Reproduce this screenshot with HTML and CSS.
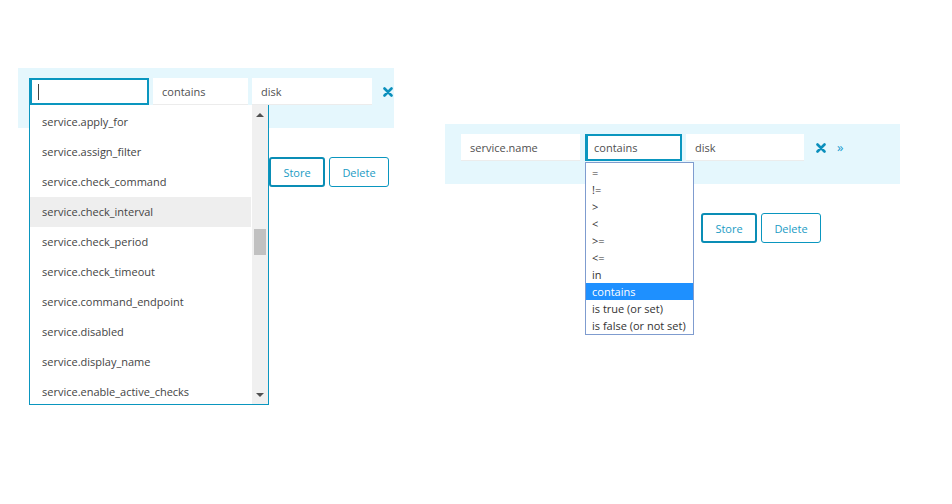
FILE: index.html
```html
<!DOCTYPE html>
<html lang="en">
<head>
  <meta charset="UTF-8">
  <title>Filter editor</title>
  <link rel="stylesheet" href="styles.css">
</head>
<body>
  <main class="stage">
    <section class="scene scene-left">
      <div class="filter-bar">
        <div class="field field-column is-focused">
          <span class="caret"></span>
          <ul class="suggestions">
            <li>service.apply_for</li>
            <li>service.assign_filter</li>
            <li>service.check_command</li>
            <li class="hover">service.check_interval</li>
            <li>service.check_period</li>
            <li>service.check_timeout</li>
            <li>service.command_endpoint</li>
            <li>service.disabled</li>
            <li>service.display_name</li>
            <li>service.enable_active_checks</li>
          </ul>
          <div class="scrollbar">
            <span class="arrow up"></span>
            <span class="thumb"></span>
            <span class="arrow down"></span>
          </div>
        </div>
        <div class="field field-op">contains</div>
        <div class="field field-value">disk</div>
        <span class="remove">
          <svg width="10" height="10" viewBox="0 0 10 10"><path d="M1.5 1.5 L8.5 8.5 M8.5 1.5 L1.5 8.5" stroke="currentColor" stroke-width="2.6" stroke-linecap="round"/></svg>
        </span>
      </div>
      <div class="actions">
        <button class="btn btn-primary">Store</button>
        <button class="btn">Delete</button>
      </div>
    </section>

    <section class="scene scene-right">
      <div class="filter-bar">
        <div class="field field-column">service.name</div>
        <div class="field field-op is-focused">contains
          <ul class="options">
            <li>=</li>
            <li>!=</li>
            <li>&gt;</li>
            <li>&lt;</li>
            <li>&gt;=</li>
            <li>&lt;=</li>
            <li>in</li>
            <li class="selected">contains</li>
            <li>is true (or set)</li>
            <li>is false (or not set)</li>
          </ul>
        </div>
        <div class="field field-value">disk</div>
        <span class="remove">
          <svg width="10" height="10" viewBox="0 0 10 10"><path d="M1.5 1.5 L8.5 8.5 M8.5 1.5 L1.5 8.5" stroke="currentColor" stroke-width="2.6" stroke-linecap="round"/></svg>
        </span>
        <span class="expand">&raquo;</span>
      </div>
      <div class="actions">
        <button class="btn btn-primary">Store</button>
        <button class="btn">Delete</button>
      </div>
    </section>
  </main>
</body>
</html>
```

FILE: styles.css
```css
html, body { min-height: 100vh; }
body {
  margin: 0;
  font-family: 'Open Sans', 'Noto Sans', sans-serif;
  font-size: 11px;
  color: #505050;
  background: #fff;
}
.stage { display: flex; align-items: flex-start; min-height: 504px; }
.scene-left { margin: 68px 0 0 18px; width: 376px; flex-shrink: 0; }
.scene-right { margin: 124px 0 0 51px; width: 455px; flex-shrink: 0; }

.filter-bar {
  background-color: #e5f7fd;
  height: 60px;
  box-sizing: border-box;
  padding: 10px 0 10px 11px;
  display: flex;
  align-items: flex-start;
  gap: 4px;
}
.scene-right .filter-bar { padding-left: 16px; }

.field {
  position: relative;
  flex-shrink: 0;
  background: #fff;
  height: 27px;
  box-sizing: border-box;
  padding: 1px 9px 0;
  display: flex;
  align-items: center;
  border-bottom: 1px solid #ececec;
}
.field-column { width: 120px; }
.field-op { width: 95px; }
.field-value { width: 120px; }
.scene-right .field-column { width: 119px; }
.scene-right .field-op { width: 97px; margin-left: 1px; }
.scene-right .field-value { width: 118px; }

.is-focused {
  border: 2px solid #0a96bf;
  border-left-width: 3px;
  padding: 0 0 0 6px;
}
.caret { width: 1px; height: 16px; background: #444; }

.remove { color: #0a8fbc; margin: 9px 0 0 7px; display: flex; flex-shrink: 0; }
.scene-right .remove { margin-left: 8px; }
.expand { color: #1a9bd0; font-size: 13px; margin: 4px 0 0 7px; }

.suggestions {
  position: absolute;
  top: 25px; left: -3px;
  width: 240px; height: 300px;
  box-sizing: border-box;
  margin: 0; padding: 2px 17px 0 0;
  list-style: none;
  background: #fff;
  border: 1px solid #0a96bf;
  border-top: none;
  z-index: 2;
  overflow: hidden;
}
.suggestions li {
  height: 30px;
  line-height: 30px;
  padding-left: 12px;
  color: #444;
}
.suggestions li.hover { background: #eeeeee; }
.scrollbar {
  position: absolute;
  top: 25px; left: 220px;
  width: 16px; height: 299px;
  background: #f0f0f0;
  z-index: 3;
}
.scrollbar .thumb {
  position: absolute;
  left: 2px; top: 124px;
  width: 12px; height: 26px;
  background: #c1c1c1;
}
.scrollbar .arrow {
  position: absolute;
  left: 4px;
  width: 0; height: 0;
  border-left: 4px solid transparent;
  border-right: 4px solid transparent;
}
.scrollbar .up { top: 8px; border-bottom: 4px solid #505050; }
.scrollbar .down { bottom: 7px; border-top: 4px solid #505050; }

.options {
  position: absolute;
  top: 26px; left: -3px;
  width: 107px;
  margin: 0; padding: 1px 0 0;
  list-style: none;
  background: #fff;
  border: 1px solid #7f9ccf;
  z-index: 2;
}
.options li {
  height: 17px;
  line-height: 17px;
  padding-left: 6px;
  color: #333;
  white-space: nowrap;
}
.options li.selected { background: #1e90ff; color: #fff; }

.actions { margin-top: 29px; display: flex; gap: 4px; padding-left: 251px; }
.scene-right .actions { padding-left: 256px; }
.btn {
  font-family: inherit;
  font-size: 11px;
  height: 30px;
  width: 60px;
  box-sizing: border-box;
  background: #fff;
  color: #1a9bc4;
  border: 1px solid #0a96bf;
  border-radius: 3px;
  cursor: pointer;
}
.btn-primary { width: 56px; border: 2px solid #0a8db5; }
```
